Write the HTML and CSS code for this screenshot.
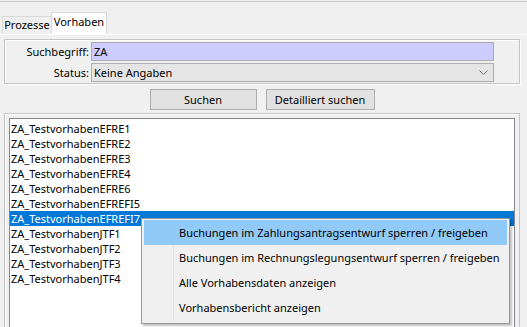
FILE: index.html
```html
<!DOCTYPE html>
<html lang="de">
<head>
  <meta charset="UTF-8" />
  <title>Vorhaben</title>
  <link rel="stylesheet" href="styles.css">
</head>
<body>
  <div class="window">
    <div class="tabs">
      <div class="tab">Prozesse</div>
      <div class="tab active">Vorhaben</div>
    </div>

    <div class="panel">
      <div class="search-box">
        <label class="field-label">Suchbegriff:</label>
        <div class="input">ZA</div>
        <label class="field-label">Status:</label>
        <div class="select">
          <span>Keine Angaben</span>
          <svg width="9" height="5" viewBox="0 0 9 5"><polyline points="0.5,0.5 4.5,4.5 8.5,0.5" fill="none" stroke="#6d6d6d" stroke-width="1"/></svg>
        </div>
      </div>

      <div class="buttons">
        <button class="btn btn-search">Suchen</button>
        <button class="btn btn-detail">Detailliert suchen</button>
      </div>

      <div class="list-box">
        <ul class="list">
          <li>ZA_TestvorhabenEFRE1</li>
          <li>ZA_TestvorhabenEFRE2</li>
          <li>ZA_TestvorhabenEFRE3</li>
          <li>ZA_TestvorhabenEFRE4</li>
          <li>ZA_TestvorhabenEFRE6</li>
          <li>ZA_TestvorhabenEFREFI5</li>
          <li class="selected">ZA_TestvorhabenEFREFI7</li>
          <li>ZA_TestvorhabenJTF1</li>
          <li>ZA_TestvorhabenJTF2</li>
          <li>ZA_TestvorhabenJTF3</li>
          <li>ZA_TestvorhabenJTF4</li>
        </ul>
      </div>
    </div>

    <div class="menu">
      <div class="menu-item hover">Buchungen im Zahlungsantragsentwurf sperren / freigeben</div>
      <div class="menu-item">Buchungen im Rechnungslegungsentwurf sperren / freigeben</div>
      <div class="menu-item">Alle Vorhabensdaten anzeigen</div>
      <div class="menu-item">Vorhabensbericht anzeigen</div>
    </div>
  </div>
</body>
</html>
```

FILE: styles.css
```css
* {
  margin: 0;
  padding: 0;
  box-sizing: border-box;
  font-family: 'Noto Sans', 'Open Sans', sans-serif;
}

body {
  background: #f0f0f0;
  color: #000;
  font-size: 11px;
  width: 527px;
  height: 327px;
  overflow: hidden;
}

.window {
  position: relative;
  height: 327px;
  margin-top: 1px;
  border-top: 1px solid #c9c9c9;
}

.tabs {
  display: flex;
  align-items: flex-end;
  height: 32px;
  padding-left: 2px;
}

.tab {
  width: 50px;
  height: 18px;
  line-height: 16px;
  text-align: center;
  border: 1px solid #d9d9d9;
  border-bottom: none;
  background: #f0f0f0;
}

.tab.active {
  width: 56px;
  height: 22px;
  margin-left: -1px;
  line-height: 17px;
  background: #fff;
}

.panel {
  padding: 4px 7px 0 4px;
  border-top: 1px solid #fff;
}

.search-box {
  display: grid;
  grid-template-columns: 83px 403px;
  column-gap: 2px;
  row-gap: 2px;
  align-items: center;
  padding: 2px 0 1px 1px;
  border: 1px solid #c4c4c4;
  box-shadow: inset 1px 1px 0 #fff, 1px 1px 0 #fff;
}

.field-label {
  text-align: right;
}

.input,
.select {
  height: 19px;
  padding-left: 2px;
  line-height: 17px;
  border: 1px solid #ababab;
}

.input {
  background: #ccccff;
}

.select {
  display: flex;
  justify-content: space-between;
  align-items: center;
  padding-right: 5px;
  background: #e5e5e5;
  border-color: #adadad;
}

.buttons {
  display: flex;
  justify-content: center;
  gap: 9px;
  margin: 5px 0 3px;
}

.btn {
  height: 21px;
  font-size: 11px;
  background: #e1e1e1;
  border: 1px solid #adadad;
}

.btn-search {
  width: 107px;
}

.btn-detail {
  width: 109px;
}

.list-box {
  height: 230px;
  padding: 4px 4px 0;
  border: 1px solid #c4c4c4;
  box-shadow: inset 1px 1px 0 #fff;
}

.list {
  list-style: none;
  height: 100%;
  padding-top: 2px;
  background: #fff;
  border: 1px solid #828790;
}

.list li {
  height: 15px;
  padding-left: 1px;
  line-height: 15px;
  white-space: nowrap;
}

.list li.selected {
  background: #0078d7;
  color: #fff;
}

.menu {
  position: absolute;
  left: 141px;
  top: 216px;
  width: 369px;
  padding: 1px 2px 3px;
  background: #f0f0f0;
  border: 1px solid #979797;
  box-shadow: 2px 2px 2px rgba(0, 0, 0, 0.25);
}

.menu::before {
  content: '';
  position: absolute;
  left: 31px;
  top: 2px;
  bottom: 2px;
  width: 1px;
  background: #e3e3e3;
}

.menu-item {
  position: relative;
  height: 25px;
  padding-left: 35px;
  line-height: 25px;
  white-space: nowrap;
}

.menu-item.hover {
  background: #91c9f7;
}
```
